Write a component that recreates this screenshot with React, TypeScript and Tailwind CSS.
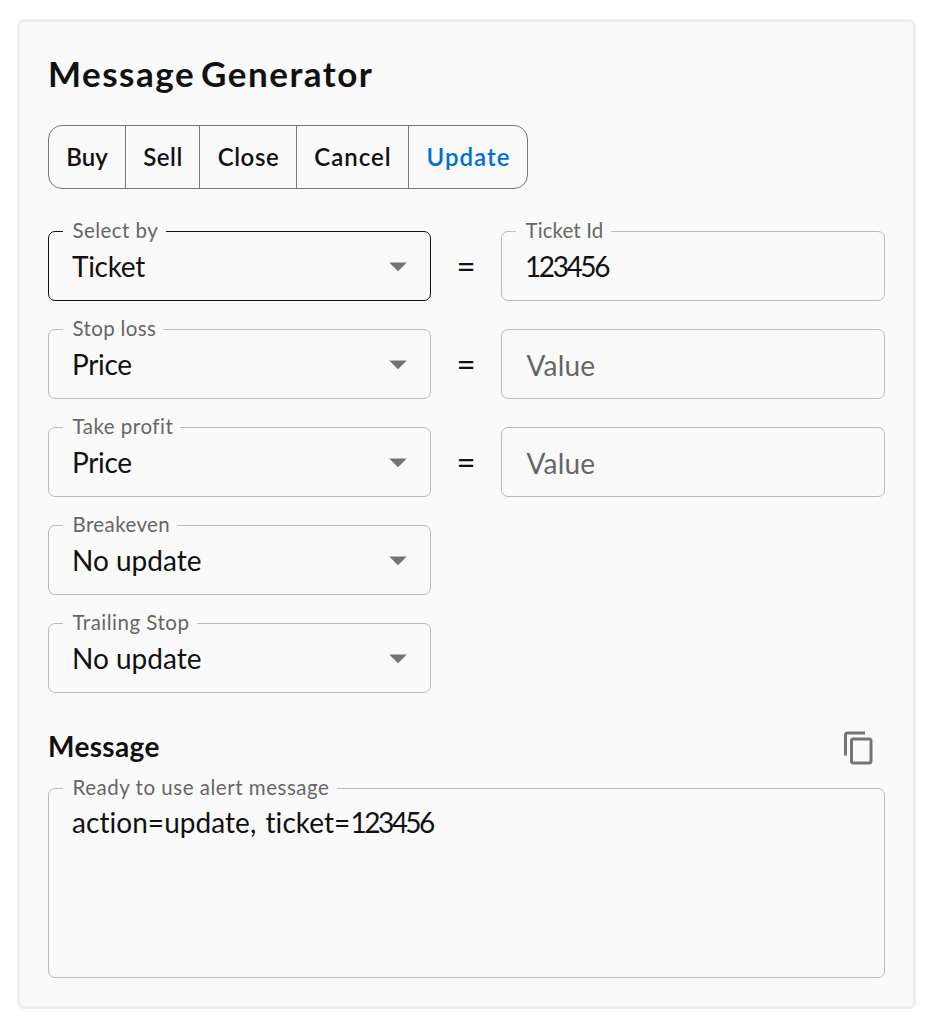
import { useState, ReactNode } from 'react';
import clsx from 'clsx';

const actions = [
  { name: 'Buy', width: 'w-[78px]', text: 'pl-px' },
  { name: 'Sell', width: 'w-[74px]', text: 'pl-px tracking-[0.5px]' },
  { name: 'Close', width: 'w-[97px]', text: 'pl-px tracking-[0.6px]' },
  { name: 'Cancel', width: 'w-[112px]', text: 'pl-px tracking-[1px]' },
  { name: 'Update', width: 'w-[119px]', text: 'tracking-[1px]' }
];

function Arrow() {
  return (
    <svg
      viewBox="0 0 24 24"
      className="w-[42px] h-[42px] ml-auto mr-[11px] fill-[#737373]"
    >
      <path d="M7 10l5 5 5-5z" />
    </svg>
  );
}

type FieldProps = {
  label?: string;
  labelClass?: string;
  className?: string;
  children: ReactNode;
};

function Field({ label, labelClass, className, children }: FieldProps) {
  return (
    <div
      className={clsx(
        'relative flex border rounded-[7px] pl-[23px]',
        className
      )}
    >
      {label && (
        <span
          className={clsx(
            'absolute left-[14px] -top-[15px] h-[26px] pl-[9.5px] bg-[#fafafa] text-[20.5px] leading-[26px] whitespace-nowrap text-[#666]',
            labelClass
          )}
        >
          {label}
        </span>
      )}
      {children}
    </div>
  );
}

function Select({ label, labelClass, value, valueClass, active = false }: any) {
  return (
    <Field
      label={label}
      labelClass={labelClass}
      className={clsx(
        'w-[383px] h-[70px] items-center',
        active ? 'border-[#111]' : 'border-[#bbb]'
      )}
    >
      <span className={clsx('text-[28px] leading-[34px]', valueClass)}>
        {value}
      </span>
      <Arrow />
    </Field>
  );
}

function ValueInput() {
  return (
    <Field className="w-[384px] h-[70px] items-center border-[#bbb]">
      <span className="pt-0.5 pl-[1.5px] text-[28px] leading-[34px] tracking-[0.2px] text-[#666]">
        Value
      </span>
    </Field>
  );
}

function Equals() {
  return (
    <span className="w-[70px] pb-[3px] text-center text-[33px] leading-[34px]">
      =
    </span>
  );
}

export default function App() {
  const [action, setAction] = useState('Update');

  return (
    <div className="min-h-[1027px] bg-white pt-[19px] pl-[17px] font-['Lato',sans-serif] text-[#111] [font-variant-ligatures:none]">
      <div className="w-[899px] h-[990px] border-3 border-[#eee] rounded-[7px] bg-[#fafafa] px-7">
        <h1 className="mt-[28px] h-[46px] text-[35px] leading-[46px] font-bold tracking-[1.5px] [word-spacing:-4px]">
          Message Generator
        </h1>

        <div className="flex w-[480px] h-16 mt-[29px] border border-[#777] rounded-[14px]">
          {actions.map((a, i) => (
            <button
              key={a.name}
              className={clsx(
                'text-2xl font-semibold',
                a.width,
                a.text,
                i < actions.length - 1 && 'border-r border-[#777]',
                i === 0 && '-ml-px',
                i === actions.length - 1 && '-mr-px',
                a.name === action && 'text-[#0070d8]'
              )}
              onClick={() => setAction(a.name)}
            >
              {a.name}
            </button>
          ))}
        </div>

        <div className="flex flex-col gap-7 mt-[42px]">
          <div className="flex items-center">
            <Select
              label="Select by"
              labelClass="w-[103px] tracking-[0.45px]"
              value="Ticket"
              valueClass="tracking-[-0.3px]"
              active
            />
            <Equals />
            <Field
              label="Ticket Id"
              labelClass="w-[95px] tracking-[0.1px]"
              className="w-[384px] h-[70px] items-center border-[#bbb]"
            >
              <span className="text-[28px] leading-[34px] tracking-[-2.4px]">
                123456
              </span>
            </Field>
          </div>
          <div className="flex items-center">
            <Select
              label="Stop loss"
              labelClass="w-[100px] tracking-[0.35px]"
              value="Price"
              valueClass="tracking-[-0.35px]"
            />
            <Equals />
            <ValueInput />
          </div>
          <div className="flex items-center">
            <Select
              label="Take profit"
              labelClass="w-[117px] tracking-[0.5px]"
              value="Price"
              valueClass="tracking-[-0.35px]"
            />
            <Equals />
            <ValueInput />
          </div>
          <Select
            label="Breakeven"
            labelClass="w-[114px] tracking-[0.4px]"
            value="No update"
          />
          <Select
            label="Trailing Stop"
            labelClass="w-[134px] tracking-[0.5px]"
            value="No update"
          />
        </div>

        <div className="flex items-center justify-between h-9 mt-[37px] pr-2">
          <h2 className="pb-[3px] text-[28px] leading-[33px] font-bold tracking-[0.35px]">
            Message
          </h2>
          <button aria-label="Copy message" className="pb-px pr-[0.5px]">
            <svg viewBox="0 0 24 24" className="w-9 h-9 fill-[#757575]">
              <path d="M16 1H4c-1.1 0-2 .9-2 2v14h2V3h12V1zm3 4H8c-1.1 0-2 .9-2 2v14c0 1.1.9 2 2 2h11c1.1 0 2-.9 2-2V7c0-1.1-.9-2-2-2zm0 16H8V7h11v14z" />
            </svg>
          </button>
        </div>

        <Field
          label="Ready to use alert message"
          labelClass="w-[274px] tracking-[0.52px]"
          className="w-[837px] h-[190px] mt-[22px] pt-[16px] border-[#bbb]"
        >
          <span className="text-[28px] leading-[34px] tracking-[0.05px] [word-spacing:2px]">
            action=update, ticket=
            <span className="tracking-[-2.5px]">123456</span>
          </span>
        </Field>
      </div>
    </div>
  );
}
